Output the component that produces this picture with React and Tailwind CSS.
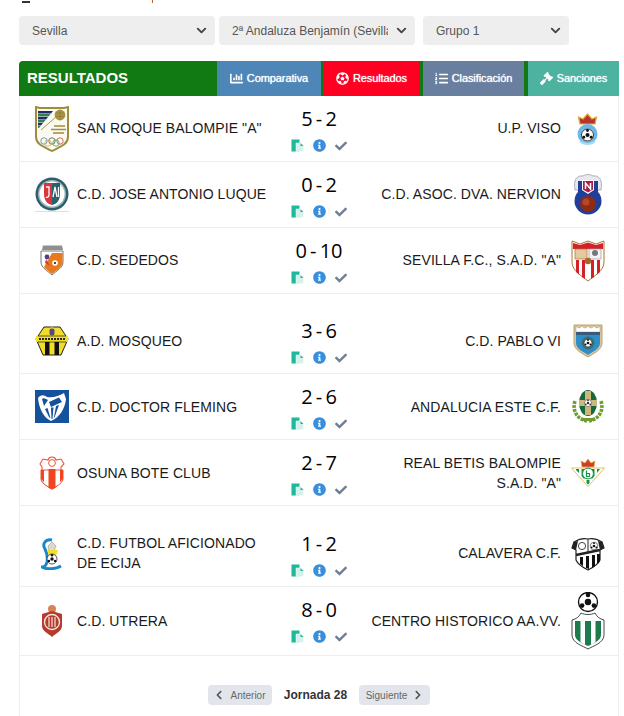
import React from 'react';
import { ChevronDown } from 'lucide-react';
import {
  FaChartBar,
  FaFutbol,
  FaListOl,
  FaGavel,
  FaInfoCircle,
  FaCheck,
  FaChevronLeft,
  FaChevronRight,
} from 'react-icons/fa';

const Ball = ({ cx, cy, r, fill = '#fff', dark = '#111' }) => (
  <g>
    <circle cx={cx} cy={cy} r={r} fill={fill} stroke={dark} strokeWidth={r * 0.14} />
    <circle cx={cx} cy={cy} r={r * 0.34} fill={dark} />
    <circle cx={cx - r * 0.62} cy={cy + r * 0.38} r={r * 0.24} fill={dark} />
    <circle cx={cx + r * 0.62} cy={cy + r * 0.38} r={r * 0.24} fill={dark} />
    <circle cx={cx} cy={cy - r * 0.75} r={r * 0.24} fill={dark} />
  </g>
);

const SanRoque = () => (
  <svg width="34" height="46" viewBox="0 0 34 46">
    <path d="M1 1 L5 2 H29 L33 1 V31 C33 39 24 41 17 45 C10 41 1 39 1 31 Z" fill="#fbfaf0" stroke="#a08c3c" strokeWidth="2" />
    <path d="M3 5 H18 L16 7.5 H3 Z" fill="#2b2763" />
    <path d="M3 8 H15.5 L13.5 10.5 H3 Z" fill="#2f7d5a" />
    <path d="M3 11 H13 L11 13.5 H3 Z" fill="#2b2763" />
    <path d="M3 14 H10.5 L8.5 16.5 H3 Z" fill="#2f7d5a" />
    <path d="M3 17 H8 L6 19.5 H3 Z" fill="#2b2763" />
    <path d="M3 20 H5.5 L4 22 H3 Z" fill="#2f7d5a" />
    <line x1="6" y1="24" x2="22" y2="10" stroke="#a08c3c" strokeWidth="0.9" />
    <circle cx="25" cy="9" r="5.4" fill="#a89548" />
    <path d="M20.5 7 H29.5 M20.5 10.5 H29.5 M25 4 V14" stroke="#857328" strokeWidth="0.5" />
    <path d="M19 20 H30 M16 23.5 H31 M18 27 H29" stroke="#a08c3c" strokeWidth="1.4" />
    <g fill="none" strokeWidth="0.9">
      <circle cx="9" cy="35" r="3.2" stroke="#5b8ed0" />
      <circle cx="17" cy="35" r="3.2" stroke="#666" />
      <circle cx="25" cy="35" r="3.2" stroke="#d05b5b" />
      <circle cx="13" cy="37" r="3.2" stroke="#d8b84a" />
      <circle cx="21" cy="37" r="3.2" stroke="#5fa86a" />
    </g>
  </svg>
);

const Luque = () => (
  <svg width="34" height="36" viewBox="0 0 34 36">
    <circle cx="17" cy="17" r="16.5" fill="#2b5f6b" />
    <circle cx="17" cy="17" r="14" fill="#9db6bc" />
    <circle cx="17" cy="17" r="12.5" fill="#fff" />
    <path d="M9 6 H17 V28 C12 27 9 23 9 17 Z" fill="#d8353f" />
    <path d="M17 6 H25 V17 C25 23 22 27 17 28 Z" fill="#2b5f6b" />
    <path d="M11 10 H14 V18 C14 20 12 21 11 20 M18 20 L20 10 L22 20 M23.5 10 V20" fill="none" stroke="#fff" strokeWidth="1.3" />
    <line x1="0" y1="34.5" x2="34" y2="34.5" stroke="#d9dfe2" />
  </svg>
);

const Sededos = () => (
  <svg width="24" height="31" viewBox="0 0 24 31">
    <path d="M3 0.5 H22 L23 5 H2 Z" fill="#8f8f8f" />
    <path d="M1 6 H23 V17 C23 23 16 26 12 30 C8 26 1 23 1 17 Z" fill="#fff" stroke="#777" />
    <path d="M12 8 L22.5 8 V17 C22.5 22 16 26 12 29 C9 27 6 24 4 22 Z" fill="#e9791a" />
    <circle cx="7" cy="12" r="2.4" fill="#4c3f8f" />
    <path d="M6 14 L10 21 L5 18 Z" fill="#c9433c" />
    <circle cx="15" cy="18" r="2.8" fill="#fff" />
    <circle cx="15" cy="18" r="1.1" fill="#222" />
  </svg>
);

const Viso = () => (
  <svg width="21" height="32" viewBox="0 0 21 32">
    <path d="M3 11 L1.5 4 L6 6 L10.5 1 L15 6 L19.5 4 L18 11 Z" fill="#b9352a" stroke="#d9ae36" strokeWidth="1.2" />
    <circle cx="10.5" cy="21" r="10" fill="#6db7e8" />
    <circle cx="10.5" cy="22" r="6.4" fill="#fff" />
    <Ball cx={10.5} cy={22} r={6} />
    <path d="M3 28 C7 32 14 32 18 28" fill="none" stroke="#a9d8f2" strokeWidth="2" />
  </svg>
);

const Nervion = () => (
  <svg width="28" height="41" viewBox="0 0 28 41">
    <path d="M1 16 C-1 6 3 1 9 2 C12 0 16 0 19 2 C25 1 29 6 27 16 Z" fill="#e8e8ee" stroke="#aeb0c0" strokeWidth="1" />
    <path d="M4 7 H24 V19 H4 Z" fill="#1f3f9a" />
    <circle cx="14" cy="27" r="13.5" fill="#1f3f9a" />
    <path d="M8 6 H20 V16 L14 20 L8 16 Z" fill="#fff" />
    <path d="M9 7 H19 V15.5 L14 18.5 L9 15.5 Z" fill="#a81f45" />
    <path d="M11.5 15 V9 L16.5 15 V9" fill="none" stroke="#fff" strokeWidth="1.5" />
    <circle cx="14" cy="30" r="8" fill="#8e2b14" />
    <circle cx="12" cy="28" r="3.5" fill="#b4492a" />
  </svg>
);

const Sevilla = () => (
  <svg width="34" height="42" viewBox="0 0 34 42">
    <path d="M1 1 L9 4 L17 1 L25 4 L33 1 V22 C33 31 23 36 17 41 C11 36 1 31 1 22 Z" fill="#fff" stroke="#a9772a" strokeWidth="1" />
    <path d="M2 3 L9 5 L17 2.5 L25 5 L32 3 V9 H2 Z" fill="#d5202a" />
    <rect x="4" y="9" width="12" height="10" fill="#e3c9a0" stroke="#a9772a" strokeWidth="0.7" />
    <rect x="18" y="9" width="12" height="10" fill="#f3f3f3" stroke="#999" strokeWidth="0.7" />
    <circle cx="24" cy="13" r="3" fill="#777" />
    <path d="M5 20 V32 L8 34.5 V20 Z M11 20 V37 L14 39 V20 Z M20 20 V39 L23 37 V20 Z M26 20 V34.5 L29 32 V20 Z" fill="#d5202a" />
    <circle cx="17" cy="21" r="3.2" fill="#a8652a" />
  </svg>
);

const Mosqueo = () => (
  <svg width="34" height="30" viewBox="0 0 34 30">
    <path d="M9 1 H25 L33 13 L26 29 H8 L1 13 Z" fill="#f2dd2a" stroke="#222" strokeWidth="1" />
    <rect x="1" y="10" width="32" height="6" fill="#f2dd2a" />
    <path d="M3 10 H31 M3 16 H31" stroke="#222" strokeWidth="0.7" />
    <path d="M10 16 H14.5 V29 H10 Z M19.5 16 H24 V29 H19.5 Z" fill="#111" />
    <path d="M4 13 H30" stroke="#222" strokeWidth="2" strokeDasharray="2 1" />
    <rect x="14.5" y="2.5" width="5" height="7" rx="2" fill="#5a4a7a" />
    <rect x="15.5" y="0.5" width="3" height="2.5" fill="#c5a46a" />
  </svg>
);

const Fleming = () => (
  <svg width="34" height="33" viewBox="0 0 34 33">
    <rect width="34" height="33" fill="#14529c" />
    <path d="M3 8 C6 4 9 5 12 7 C18 8 24 6 29 3 L31 9 C30 19 24 28 16 31 C9 28 4 19 3 8 Z" fill="#fff" />
    <path d="M7 9 C9 7 11 9 13 10 L9 16 Z M14 12 L24 7.5 L27 12 L16 17 Z" fill="#14529c" />
    <path d="M10 19 L12.5 18 L15.5 28 L14 27 Z M16 17.5 H18.5 L17.5 29 H16.5 Z M21 16 L24 15 L19.5 27.5 L18.8 28 Z" fill="#14529c" />
  </svg>
);

const Osuna = () => (
  <svg width="26" height="34" viewBox="0 0 26 34">
    <path d="M9 4 C10 0 16 0 17 4 L22 3 L25 8 L22 11 V25 C20 29 16 31 13 33 C10 31 5 29 3 25 V11 L1 8 L4 3 Z" fill="#fff" stroke="#f0543a" strokeWidth="1.1" />
    <circle cx="13" cy="7" r="3.4" fill="#fff" stroke="#f0543a" />
    <path d="M2 14 H24 V24 C22 28 17 31 13 33 C9 31 4 28 2 24 Z" fill="#fff" stroke="#f0543a" />
    <path d="M9.5 13 H16.5 V32 L13 33 L9.5 32 Z M2 14 H5 V26 L2 23 Z M21 14 H24 V23 L21 26 Z" fill="#f0451f" />
  </svg>
);

const PabloVI = () => (
  <svg width="30" height="35" viewBox="0 0 30 35">
    <path d="M1 2 H29 V20 C29 27 20 31 15 34 C10 31 1 27 1 20 Z" fill="#d7c49a" stroke="#b9a477" />
    <path d="M3 3 Q6 7 9 3 Q12 7 15 3 Q18 7 21 3 Q24 7 27 3 V9 H3 Z" fill="#fff" stroke="#b9a477" strokeWidth="0.6" />
    <rect x="3" y="9" width="24" height="3" fill="#375a7d" />
    <path d="M3 12 H27 V20 C27 26 19 29 15 32 C11 29 3 26 3 20 Z" fill="#2e8ec8" />
    <circle cx="15" cy="20" r="6.5" fill="#3b6f72" />
    <Ball cx={15} cy={20} r={4} />
  </svg>
);

const AndaluciaEste = () => (
  <svg width="32" height="33" viewBox="0 0 32 33">
    <path d="M3 11 C0 21 5 29 15 31 M29 11 C32 21 27 29 17 31" fill="none" stroke="#6e9f2e" strokeWidth="3.6" strokeDasharray="3 1" />
    <ellipse cx="16" cy="13" rx="9" ry="13" fill="#17683a" />
    <path d="M13 1 H19 V10 H25 V16 H19 V25 H13 V16 H7 V10 H13 Z" fill="#cdb77e" />
    <Ball cx={16} cy={13} r={3.6} dark="#333" />
    <rect x="10" y="28" width="12" height="3" fill="#6e9f2e" />
  </svg>
);

const Betis = () => (
  <svg width="34" height="29" viewBox="0 0 34 29">
    <path d="M11 9 L10 3 L14 5 L17 1 L20 5 L24 3 L23 9 Z" fill="#d23a2b" stroke="#dcb23c" strokeWidth="0.8" />
    <path d="M0.5 10 H33.5 L17 28.5 Z" fill="#fff" stroke="#dcb23c" strokeWidth="0.8" />
    <path d="M5 11 H8 V15 L5 12 Z M10.5 11 H13.5 V21.5 L10.5 18 Z M20.5 11 H23.5 V18 L20.5 21.5 Z M26 11 H29 L26 15 Z M15.5 22 H18.5 V25 L17 26.5 L15.5 25 Z" fill="#179447" />
    <circle cx="17" cy="15.5" r="5.4" fill="#fff" stroke="#179447" />
    <path d="M15.5 12.5 V18.5 H18.5 V15.5 H15.5" fill="none" stroke="#179447" strokeWidth="1.2" />
  </svg>
);

const Aficionado = () => (
  <svg width="21" height="32" viewBox="0 0 21 32">
    <path d="M11 2 C4 1 1 6 4 11 C6 15 7 19 6 24 C5 28 3 29 1 29 C6 32 15 31 20 28" fill="none" stroke="#1b86c9" strokeWidth="3" />
    <path d="M11 4 L15 8 L13 13 H8 L7 8 Z" fill="#ded9c8" stroke="#888" strokeWidth="0.5" />
    <path d="M6 12 H17 L15 18 H8 Z" fill="#f2df2a" />
    <Ball cx={11} cy={21} r={5} />
  </svg>
);

const Utrera = () => (
  <svg width="22" height="32" viewBox="0 0 22 32">
    <circle cx="11" cy="4" r="4" fill="#d98455" />
    <path d="M1 9 L11 6 L21 9 V21 C21 26 14 29 11 32 C8 29 1 26 1 21 Z" fill="#b43b2d" />
    <circle cx="11" cy="17" r="7.5" fill="none" stroke="#f4e6dc" strokeWidth="1.4" />
    <path d="M8 12 V22 M11 12 V22 M14 12 V22" stroke="#f4e6dc" strokeWidth="1.2" />
  </svg>
);

const Calavera = () => (
  <svg width="34" height="35" viewBox="0 0 34 35">
    <path d="M3 6 C8 3 13 2 17 3 C21 2 26 3 31 6 L33 12 L29 14 V24 C27 29 21 32 17 34 C13 32 7 29 5 24 V14 L1 12 Z" fill="#fff" stroke="#222" strokeWidth="1.2" />
    <path d="M1 12 L3 6 L7 5 L5 14 Z M33 12 L31 6 L27 5 L29 14 Z" fill="#222" />
    <circle cx="11" cy="10" r="3.6" fill="#fff" stroke="#444" />
    <Ball cx={23} cy={10} r={3.8} />
    <line x1="17" y1="3" x2="17" y2="16" stroke="#222" />
    <path d="M5 19 L29 14" stroke="#222" strokeWidth="2.4" />
    <path d="M9 21 H12 V30 L9 28 Z M15 20 H18 V33 L15 32 Z M21 19 H24 V30 L21 32 Z M26 18 H29 V25 L26 28 Z" fill="#111" />
  </svg>
);

const CentroHistorico = () => (
  <svg width="34" height="58" viewBox="0 0 34 58">
    <Ball cx={17} cy={10} r={9.5} />
    <path d="M1 28 C5 27 8 25 10 21 C14 23 20 23 24 21 C26 25 29 27 33 28 V43 C33 51 22 54 17 57 C12 54 1 51 1 43 Z" fill="#fff" stroke="#333" strokeWidth="0.9" />
    <path d="M4 29 H30 V43 C30 49 21 52 17 54 C13 52 4 49 4 43 Z" fill="#1c7a4b" />
    <path d="M9.5 27 H14 V53 L9.5 50 Z M20 27 H24.5 V50 L20 53 Z" fill="#fff" />
  </svg>
);

const FilesIcon = () => (
  <svg width="13" height="13" viewBox="0 0 13 13">
    <rect x="0.5" y="0.5" width="8" height="12" fill="#1eb89a" />
    <path d="M5 4 H9.5 L12.5 7 V12.5 H5 Z" fill="#d6f1ea" stroke="#fff" strokeWidth="0.5" />
    <path d="M9.5 4 V7 H12.5 Z" fill="#1eb89a" />
  </svg>
);

// lift: el texto del equipo va 1px más arriba en estas filas
const MATCH_GROUPS = [
  [
    { home: 'SAN ROQUE BALOMPIE "A"', homeLogo: SanRoque, score: '5 - 2', away: 'U.P. VISO', awayLogo: Viso, lift: true },
    { home: 'C.D. JOSE ANTONIO LUQUE', homeLogo: Luque, score: '0 - 2', away: 'C.D. ASOC. DVA. NERVION', awayLogo: Nervion, lift: true },
    { home: 'C.D. SEDEDOS', homeLogo: Sededos, score: '0 - 10', away: 'SEVILLA F.C., S.A.D. "A"', awayLogo: Sevilla, lift: true },
  ],
  [
    { home: 'A.D. MOSQUEO', homeLogo: Mosqueo, score: '3 - 6', away: 'C.D. PABLO VI', awayLogo: PabloVI },
    { home: 'C.D. DOCTOR FLEMING', homeLogo: Fleming, score: '2 - 6', away: 'ANDALUCIA ESTE C.F.', awayLogo: AndaluciaEste },
    { home: 'OSUNA BOTE CLUB', homeLogo: Osuna, score: '2 - 7', away: 'REAL BETIS BALOMPIE S.A.D. "A"', awayLogo: Betis },
  ],
  [
    { home: 'C.D. FUTBOL AFICIONADO DE ECIJA', homeLogo: Aficionado, score: '1 - 2', away: 'CALAVERA C.F.', awayLogo: Calavera, lift: true },
    { home: 'C.D. UTRERA', homeLogo: Utrera, score: '8 - 0', away: 'CENTRO HISTORICO AA.VV.', awayLogo: CentroHistorico, tall: true },
  ],
];

function FilterSelect({ width, value }) {
  return (
    <div className={`relative ${width}`}>
      <select
        defaultValue={value}
        className="h-[29px] w-full appearance-none rounded bg-[#eeeeee] pl-[13px] pr-[27px] text-xs text-[#555555] outline-none"
      >
        <option>{value}</option>
      </select>
      <ChevronDown size={15} strokeWidth={3} className="pointer-events-none absolute right-[6px] top-[7px] text-[#444444]" />
    </div>
  );
}

function Tab({ width, color, icon: Icon, label }) {
  return (
    <div className={`flex h-full items-center justify-center gap-[4px] text-[11px] tracking-[-0.1px] text-white [text-shadow:0_0_1px_#ffffff] ${width} ${color}`}>
      <Icon size={13} />
      <span>{label}</span>
    </div>
  );
}

function MatchRow({ match }) {
  const HomeLogo = match.homeLogo;
  const AwayLogo = match.awayLogo;
  const nameLift = match.lift ? 'pb-[2px]' : '';
  return (
    <div className={`grid grid-cols-[250px_98px_1fr] border-b border-[#eeeeee] ${match.tall ? 'h-[69px]' : 'h-[66px]'}`}>
      <div className="flex items-center">
        <div className="flex w-[57px] shrink-0 justify-center pl-[6px]">
          <HomeLogo />
        </div>
        <div className={`w-[190px] text-sm leading-5 tracking-[0.09px] text-[#1a1a1a] ${nameLift}`}>{match.home}</div>
      </div>
      <div className="flex flex-col items-center pt-[11px]">
        <div className="font-['Open_Sans',sans-serif] text-xl font-medium leading-6 text-black [word-spacing:-2px]">{match.score}</div>
        <div className="mt-[8px] flex items-center gap-[9px]">
          <FilesIcon />
          <FaInfoCircle size={13} className="text-[#3a8fdc]" />
          <FaCheck size={12} className="text-[#6f7f99]" />
        </div>
      </div>
      <div className="flex items-center justify-end">
        <div className={`w-[190px] text-right text-sm leading-5 tracking-[0.09px] text-[#1a1a1a] ${nameLift}`}>{match.away}</div>
        <div className="flex w-[57px] shrink-0 justify-center pl-[1px] pr-[5px]">
          <AwayLogo />
        </div>
      </div>
    </div>
  );
}

export default function App() {
  return (
    <div className="h-[716px] w-[624px] overflow-hidden bg-white font-['Liberation_Sans',Arial,sans-serif]">
      <div className="flex h-[3px] items-end pl-[22px]">
        <span className="h-[2px] w-[8px] bg-[#333333]" />
        <span className="ml-[122px] h-[3px] w-[1px] bg-[#b5652a]" />
      </div>

      <div className="mt-[13px] flex pl-[19px]">
        <FilterSelect width="w-[196px]" value="Sevilla" />
        <div className="ml-[4px]">
          <FilterSelect width="w-[196px]" value="2ª Andaluza Benjamín (Sevilla)" />
        </div>
        <div className="ml-[8px]">
          <FilterSelect width="w-[146px]" value="Grupo 1" />
        </div>
      </div>

      <div className="ml-[19px] mt-[16px] w-[600px]">
        <div className="flex h-[35px] items-center rounded-tl bg-[#117a12]">
          <div className="w-[198px] pl-[8px] text-[15px] font-bold text-white">RESULTADOS</div>
          <Tab width="w-[104px]" color="bg-[#4f86b8]" icon={FaChartBar} label="Comparativa" />
          <div className="w-[3px]" />
          <Tab width="w-[95px]" color="bg-[#ff0022]" icon={FaFutbol} label="Resultados" />
          <div className="w-[4px]" />
          <Tab width="w-[101px]" color="bg-[#697fa0]" icon={FaListOl} label="Clasificación" />
          <div className="w-[4px]" />
          <Tab width="w-[91px]" color="bg-[#4db2a0]" icon={FaGavel} label="Sanciones" />
        </div>

        <div className="h-[630px] border-x border-[#eeeeee]">
          {MATCH_GROUPS.map((group, i) => (
            <div key={i} className={i === 1 ? 'mb-[15px] mt-[14px]' : ''}>
              {group.map((match) => (
                <MatchRow key={match.home} match={match} />
              ))}
            </div>
          ))}

          <div className="mt-[29px] flex items-start justify-center">
            <button className="flex h-[20px] w-[64px] items-center justify-center gap-[6px] rounded-sm bg-[#e2e6ec] text-[10px] text-[#666666]">
              <FaChevronLeft size={10} className="text-[#555555]" />
              Anterior
            </button>
            <div className="w-[87px] pt-[2px] text-center text-xs font-bold text-[#333333]">Jornada 28</div>
            <button className="flex h-[20px] w-[71px] items-center justify-center gap-[6px] rounded-sm bg-[#e2e6ec] text-[10px] text-[#666666]">
              Siguiente
              <FaChevronRight size={10} className="text-[#555555]" />
            </button>
          </div>
        </div>
      </div>
    </div>
  );
}
